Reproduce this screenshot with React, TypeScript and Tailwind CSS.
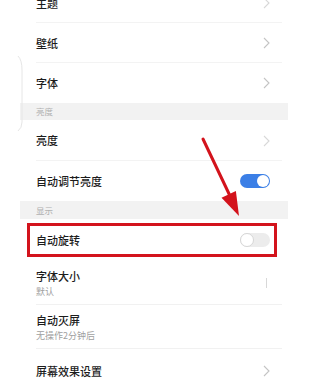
import React from "react";

const font = { fontFamily: '"Noto Sans CJK SC", "Noto Sans", sans-serif' };

function Chevron({ faint = false }: { faint?: boolean }) {
  return (
    <svg width="7" height="12" viewBox="0 0 7 12" className="shrink-0">
      <path d="M1 1 L6 6 L1 11" fill="none" stroke={faint ? "#d8d8d8" : "#c4c4c4"} strokeWidth="1.1" />
    </svg>
  );
}

function ToggleOn() {
  return (
    <div className="w-[30px] h-[14px] rounded-full bg-[#3b7fe6] flex items-center justify-end pr-[1px]">
      <div className="w-[12px] h-[12px] rounded-full bg-white" />
    </div>
  );
}

function ToggleOff() {
  return (
    <div className="w-[30px] h-[14px] rounded-full bg-[#ececec] flex items-center justify-start">
      <div className="w-[14px] h-[14px] rounded-full bg-white border border-[#d6d6d6]" />
    </div>
  );
}

function Row({ label, h = 40, right, sep = true }: { label: string; h?: number; right?: React.ReactNode; sep?: boolean }) {
  return (
    <div className="relative flex items-center justify-between pl-4 pr-[18px]" style={{ height: h }}>
      <span className="text-[11px] font-medium text-[#1c1c1c] leading-none">{label}</span>
      {right}
      {sep && <div className="absolute left-4 right-[6px] bottom-0 h-px bg-[#f3f3f3]" />}
    </div>
  );
}

function Row2({ label, sub, h = 44, right, sep = true }: { label: string; sub: string; h?: number; right?: React.ReactNode; sep?: boolean }) {
  return (
    <div className="relative flex items-center justify-between pl-4 pr-[18px]" style={{ height: h }}>
      <div className="flex flex-col gap-[5px]">
        <span className="text-[11px] font-medium text-[#1c1c1c] leading-none">{label}</span>
        <span className="text-[9px] text-[#a0a0a0] leading-none">{sub}</span>
      </div>
      {right}
      {sep && <div className="absolute left-4 right-[6px] bottom-0 h-px bg-[#f1f1f1]" />}
    </div>
  );
}

function Header({ label, h }: { label: string; h: number }) {
  return (
    <div className="flex items-center pl-4 bg-[#f2f2f2]" style={{ height: h }}>
      <span className="text-[8.5px] text-[#b0b0b0] leading-none">{label}</span>
    </div>
  );
}

export default function App() {
  return (
    <div className="relative w-[321px] h-[391px] bg-white overflow-hidden" style={font}>
      <div className="ml-5 w-[268px] -mt-[17px] flex flex-col">
        <Row label="主题" right={<Chevron faint />} />
        <Row label="壁纸" right={<Chevron />} />
        <Row label="字体" right={<Chevron />} sep={false} />
        <Header label="亮度" h={17} />
        <Row label="亮度" h={41} right={<Chevron faint />} />
        <Row label="自动调节亮度" right={<ToggleOn />} sep={false} />
        <Header label="显示" h={18} />
        <Row label="自动旋转" h={42} right={<ToggleOff />} sep={false} />
        <Row2 label="字体大小" sub="默认" right={<div className="w-px h-[10px] bg-[#d8d8d8] mr-[3px]" />} />
        <Row2 label="自动灭屏" sub="无操作2分钟后" />
        <Row label="屏幕效果设置" h={44} right={<Chevron />} sep={false} />
      </div>

      {/* red highlight box */}
      <div className="absolute left-[27px] top-[223px] w-[250px] h-[34px] border-[3px] border-[#d3131c]" />

      {/* faint phone edge + arrow */}
      <svg className="absolute left-0 top-0 pointer-events-none" width="321" height="391">
        <path d="M18 56 Q22 60 22 70 L22 122 Q22 128 18 131" fill="none" stroke="#e6e6e6" strokeWidth="1" />
        <line x1="203" y1="139" x2="231" y2="198" stroke="#d3131c" strokeWidth="3" strokeLinecap="round" />
        <polygon points="221.5,197.7 235.9,190.9 239,216" fill="#d3131c" />
      </svg>
    </div>
  );
}
